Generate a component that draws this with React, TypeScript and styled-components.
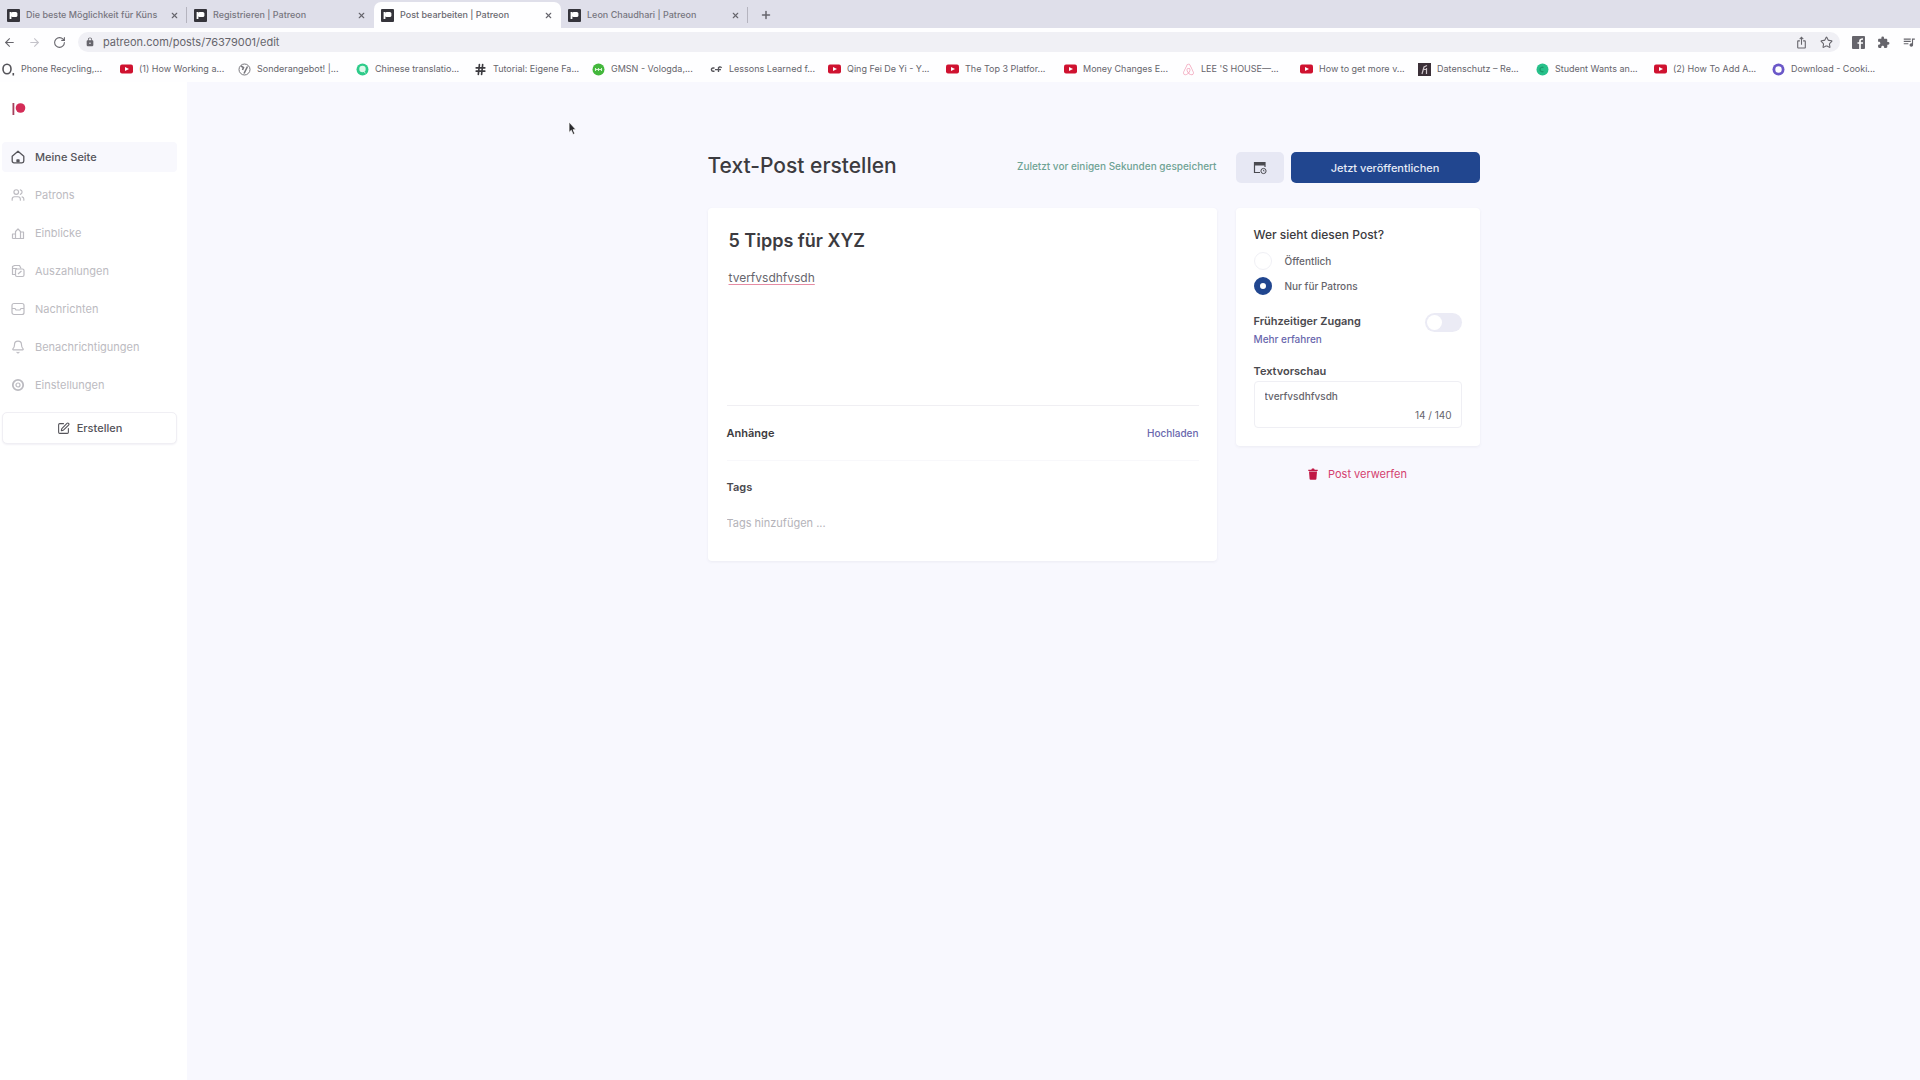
import React, { useState } from 'react';
import styled, { createGlobalStyle, css } from 'styled-components';
import { ArrowLeft, ArrowRight, RotateCw, X, Plus, Star, Users, Bell, SquarePen, Hash } from 'lucide-react';
import { MdExtension, MdQueueMusic, MdLock, MdIosShare } from 'react-icons/md';
import { FaAirbnb } from 'react-icons/fa';

const GlobalStyle = createGlobalStyle`
  *, *::before, *::after { box-sizing: border-box; }
  body {
    margin: 0;
    background: #f8f8fe;
    color: #3c3b40;
    font-family: Inter, "Liberation Sans", sans-serif;
    font-size: 11px;
    line-height: 16px;
  }
  button, input, textarea { font: inherit; color: inherit; }
  button { border: 0; padding: 0; background: none; cursor: pointer; }
  a { color: inherit; text-decoration: none; }
  svg { display: block; flex: none; }
  h1, h2, p { margin: 0; }
`;

const Page = styled.div`
  display: flex;
  flex-direction: column;
  min-height: 100vh;
`;

/* ---------- Browser chrome ---------- */

const TabStrip = styled.div`
  display: flex;
  align-items: stretch;
  height: 28px;
  background: #dfdfea;
`;

const Tab = styled.div<{ $active?: boolean; $divider?: boolean }>`
  display: flex;
  align-items: center;
  gap: 6px;
  width: 187px;
  margin-top: 2px;
  padding: 0 8px 0 7px;
  color: #77767f;
  font-size: 9px;
  border-radius: 7px 7px 0 0;
  ${p => p.$active && css`
    background: #fefeff;
    color: #6a6970;
  `}
  ${p => p.$divider && css`
    border-radius: 0;
    background: linear-gradient(#b5b4bf, #b5b4bf) right center / 1px 16px no-repeat;
  `}
`;

const TabTitle = styled.button`
  flex: 1;
  min-width: 0;
  white-space: nowrap;
  text-align: left;
  font-weight: 500;
`;

const IconButton = styled.button`
  display: flex;
  align-items: center;
  justify-content: center;
  color: #66656c;
`;

const NewTab = styled(IconButton)`
  width: 36px;
  margin-top: 2px;
`;

const Toolbar = styled.div`
  display: flex;
  align-items: center;
  gap: 12px;
  height: 28px;
  padding: 0 4px 0 3px;
  background: #fefeff;
`;

const Omnibox = styled.div`
  display: flex;
  align-items: center;
  flex: 1;
  gap: 8px;
  height: 20px;
  padding: 0 7px;
  border-radius: 10px;
  background: #f0f0f5;
  color: #66656c;
`;

const Address = styled.input`
  flex: 1;
  min-width: 0;
  border: 0;
  padding: 0;
  outline: 0;
  background: none;
  font-size: 11px;
`;

const IconRow = styled.div`
  display: flex;
  gap: 12px;
`;

const Bookmarks = styled.nav`
  display: flex;
  align-items: center;
  height: 26px;
  padding-left: 2px;
  overflow: hidden;
  background: #fefeff;
`;

const Bookmark = styled.a`
  display: flex;
  align-items: center;
  gap: 6px;
  flex: none;
  width: 118px;
  color: #66656c;
  font-size: 9px;
  white-space: nowrap;
`;

/* ---------- App layout ---------- */

const Shell = styled.div`
  display: flex;
  flex: 1;
`;

const Sidebar = styled.aside`
  flex: none;
  width: 187px;
  padding: 20px 10px 0 2px;
  background: #fff;
`;

const Logo = styled.a`
  display: block;
  width: 16px;
  margin: 0 0 26px 10px;
`;

const NavList = styled.nav`
  display: flex;
  flex-direction: column;
  gap: 8px;
`;

const NavItem = styled.a<{ $active?: boolean }>`
  display: flex;
  align-items: center;
  gap: 10px;
  height: 30px;
  padding-left: 9px;
  border-radius: 4px;
  color: ${p => (p.$active ? '#55545a' : '#bcbbc1')};
  background: ${p => (p.$active ? '#f8f8fd' : 'transparent')};
  font-weight: ${p => (p.$active ? 500 : 400)};
`;

const CreateButton = styled.button`
  display: flex;
  align-items: center;
  justify-content: center;
  gap: 7px;
  width: 100%;
  height: 32px;
  margin-top: 12px;
  border: 1px solid #f0eff4;
  border-radius: 5px;
  background: #fff;
  box-shadow: 0 1px 2px #f2f1f6;
  color: #55545a;
  font-weight: 500;
`;

const Main = styled.main`
  flex: 1;
  display: flex;
  justify-content: center;
  padding: 70px 0 40px 80px;
`;

const Editor = styled.form`
  display: grid;
  grid-template-columns: minmax(0, 509px) 244px;
  grid-template-rows: 31px auto;
  column-gap: 19px;
  row-gap: 25px;
  align-items: start;
`;

const Heading = styled.header`
  display: flex;
  align-items: center;
  justify-content: space-between;
`;

const PageTitle = styled.h1`
  font-size: 21px;
  line-height: 28px;
  font-weight: 500;
`;

const Saved = styled.p`
  color: #6fa394;
  font-size: 10px;
  font-weight: 500;
`;

const Actions = styled.div`
  display: flex;
  gap: 7px;
  height: 31px;
`;

const ScheduleButton = styled(IconButton)`
  width: 48px;
  border-radius: 5px;
  background: #e7e8f4;
  color: #4a4a50;
`;

const PublishButton = styled.button`
  flex: 1;
  border-radius: 5px;
  background: #21468f;
  color: #e6ebf7;
  font-weight: 500;
`;

const Card = styled.section`
  border-radius: 4px;
  background: #fff;
  box-shadow: 0 1px 3px #ebebf3;
`;

const PostCard = styled(Card)`
  padding: 18px 18px 28px 19px;
`;

const PostTitle = styled.input`
  display: block;
  width: 100%;
  height: 28px;
  padding: 0 2px;
  border: 0;
  outline: 0;
  background: none;
  font-size: 18px;
  font-weight: 600;
`;

const PostBody = styled.textarea`
  display: block;
  width: 100%;
  height: 136px;
  margin-top: 15px;
  padding: 0 2px;
  border: 0;
  outline: 0;
  resize: none;
  background: none;
  color: #66656c;
  font-size: 12px;
  line-height: 18px;
  text-decoration: underline 1px #e58ca4;
  text-underline-offset: 2px;
`;

const Attachments = styled.div`
  display: flex;
  align-items: center;
  justify-content: space-between;
  height: 56px;
  border-top: 1px solid #f0eff3;
  border-bottom: 1px solid #f8f8fb;
`;

const SmallTitle = styled.h2`
  font-size: 11px;
  line-height: 16px;
  font-weight: 600;
`;

const LinkButton = styled.button`
  color: #6967ad;
  font-size: 10px;
  font-weight: 500;
`;

const Tags = styled.div`
  display: flex;
  flex-direction: column;
  gap: 18px;
  padding-top: 18px;
`;

const FieldLabel = styled.label`
  display: block;
  font-weight: 600;
  color: #4a494e;
`;

const TagInput = styled.input`
  width: 100%;
  height: 20px;
  padding: 0;
  border: 0;
  outline: 0;
  background: none;
  font-size: 11px;
  &::placeholder { color: #b4b3b9; opacity: 1; }
`;

const Side = styled.div`
  display: flex;
  flex-direction: column;
  align-items: center;
  gap: 20px;
`;

const SettingsCard = styled(Card)`
  width: 100%;
  padding: 18px;
`;

const Audience = styled.fieldset`
  display: flex;
  flex-direction: column;
  gap: 7px;
  margin: 0;
  padding: 0;
  border: 0;
`;

const Legend = styled.legend`
  padding: 0;
  margin-bottom: 8px;
  font-size: 12px;
  line-height: 18px;
  font-weight: 500;
`;

const RadioLabel = styled.label`
  display: flex;
  align-items: center;
  gap: 13px;
  height: 18px;
  color: #66656c;
  font-size: 10px;
  font-weight: 500;
`;

const Radio = styled.input.attrs({ type: 'radio' })`
  appearance: none;
  width: 18px;
  height: 18px;
  margin: 0;
  border: 1px solid #f0f0f5;
  border-radius: 50%;
  background: #fff;
  &:checked { border: 6px solid #21468f; }
`;

const EarlyAccess = styled.div`
  display: flex;
  align-items: flex-start;
  justify-content: space-between;
  margin-top: 18px;
`;

const MoreLink = styled.a`
  display: block;
  margin-top: 2px;
  color: #6967ad;
  font-size: 10px;
  font-weight: 500;
`;

const Switch = styled.input.attrs({ type: 'checkbox', role: 'switch' })`
  appearance: none;
  display: flex;
  width: 37px;
  height: 19px;
  margin: 0;
  padding: 2px;
  border-radius: 10px;
  background: #ebebf5;
  &::before {
    content: '';
    width: 15px;
    height: 15px;
    border-radius: 50%;
    background: #fff;
  }
  &:checked { justify-content: flex-end; background: #21468f; }
`;

const Preview = styled.div`
  margin-top: 16px;
`;

const PreviewBox = styled.div`
  display: flex;
  flex-direction: column;
  height: 47px;
  margin-top: 2px;
  padding: 6px 9px 4px 10px;
  border: 1px solid #efeff4;
  border-radius: 4px;
  color: #66656c;
  font-size: 10px;
`;

const PreviewText = styled.textarea`
  flex: 1;
  min-height: 0;
  padding: 0;
  border: 0;
  outline: 0;
  resize: none;
  overflow: hidden;
  background: none;
  font-weight: 500;
`;

const Counter = styled.output`
  align-self: flex-end;
`;

const Discard = styled.button`
  display: flex;
  align-items: center;
  gap: 10px;
  color: #d4416f;
  font-size: 11px;
`;

const Pointer = styled.svg`
  position: absolute;
  left: 568px;
  top: 121px;
  pointer-events: none;
`;

/* ---------- Drawings ---------- */

const PatreonFavicon = () => (
  <svg width="13" height="13" viewBox="0 0 13 13">
    <rect width="13" height="13" rx="1" fill="#35343b" />
    <rect x="2.6" y="3" width="1.8" height="7" fill="#fff" />
    <rect x="4" y="3" width="6.400" height="5" rx="1.600" fill="#fff" />
  </svg>
);

const PatreonLogo = () => (
  <svg width="16" height="14" viewBox="0 0 16 14">
    <rect x="0.5" y="1" width="1.8" height="12" fill="#a5405c" />
    <circle cx="8.5" cy="6" r="4.8" fill="#d42c57" />
  </svg>
);

const YouTubeIcon = () => (
  <svg width="13" height="12" viewBox="0 0 13 12">
    <rect y="1.5" width="13" height="9" rx="2" fill="#cf1230" />
    <path d="M5 4l4 2-4 2z" fill="#fff" />
  </svg>
);

const Disc = ({ fill, children }: { fill: string; children?: React.ReactNode }) => (
  <svg width="13" height="13" viewBox="0 0 13 13">
    <circle cx="6.5" cy="6.5" r="6" fill={fill} />
    {children}
  </svg>
);

const icons: Record<string, React.ReactNode> = {
  q: (
    <svg width="13" height="13" viewBox="0 0 13 13" fill="none" stroke="#55545a" strokeWidth="1.6">
      <ellipse cx="5" cy="6" rx="4" ry="4.800" />
      <path d="M11.300 10v2.500" />
    </svg>
  ),
  yt: <YouTubeIcon />,
  globe: (
    <svg width="13" height="13" viewBox="0 0 13 13" fill="none" stroke="#77767c" strokeWidth="1">
      <circle cx="6.5" cy="6.5" r="5.5" />
      <path d="M3 3l2.500 1.500L4.500 7M6 10.500l3.500-7" strokeWidth="1.6" />
    </svg>
  ),
  chat: <Disc fill="#2ecb8a"><circle cx="6.5" cy="6" r="3.2" fill="#dcf8ea" /><path d="M7 8l2.5 2" stroke="#dcf8ea" /></Disc>,
  hash: <Hash size={13} color="#3c3b40" strokeWidth={3} />,
  gmsn: <Disc fill="#43b73c"><path d="M3 6.5h7M3.5 5v3M6.5 5v3M9.5 5v3" stroke="#d6f3d2" strokeWidth="1.1" /></Disc>,
  cf: (
    <svg width="13" height="13" viewBox="0 0 13 13" fill="none" stroke="#55545a" strokeWidth="1.4">
      <path d="M4.5 5H3a1.6 1.6 0 0 0 0 3.2h1.5M5 6.6h6M8.5 9V6a1.5 1.5 0 0 1 3-1" />
    </svg>
  ),
  airbnb: <FaAirbnb size={13} color="#f2a3ba" />,
  dark: (
    <svg width="13" height="13" viewBox="0 0 13 13">
      <rect width="13" height="13" fill="#3b3038" />
      <path d="M4 11l2-7 3-1.5M5 6.5h4M8.5 5v6" stroke="#cfc6cc" strokeWidth="1.2" fill="none" />
    </svg>
  ),
  green: <Disc fill="#27c08a"><path d="M7.5 4.5a2.3 2.3 0 1 0 0 4" stroke="#1c9a6c" strokeWidth="1.4" fill="none" /></Disc>,
  ring: <Disc fill="#6a57c8"><circle cx="6.5" cy="6.5" r="3.2" fill="#fff" /></Disc>,
};

const InsightsIcon = () => (
  <svg width="14" height="14" viewBox="0 0 14 14" fill="none" stroke="currentColor" strokeWidth="1.2" strokeLinejoin="round">
    <path d="M1.5 12.5V8h3v4.500M4.500 12.500V5.500L7 3l2.500 2.500v7M9.500 12.500V6h3v6.500zM1.500 12.500h11" />
  </svg>
);

const PayoutIcon = () => (
  <svg width="14" height="14" viewBox="0 0 14 14" fill="none" stroke="currentColor" strokeWidth="1.2" strokeLinejoin="round">
    <path d="M4.500 10.500h-3v-8l2-1h5l1.500 3" />
    <rect x="4.500" y="5" width="8.500" height="7.500" rx="1.500" />
    <path d="M2 4.500h4M7 10l3.500-3" />
  </svg>
);

const InboxIcon = () => (
  <svg width="14" height="14" viewBox="0 0 14 14" fill="none" stroke="currentColor" strokeWidth="1.2">
    <rect x="1" y="1.500" width="12" height="11" rx="2" />
    <path d="M1 6.500h3l1 1.500h4l1-1.500h3" />
  </svg>
);

const SettingsIcon = () => (
  <svg width="14" height="14" viewBox="0 0 14 14" fill="none" stroke="currentColor">
    <circle cx="7" cy="7" r="5.200" strokeWidth="1.800" />
    <circle cx="7" cy="7" r="2" strokeWidth="1.200" />
  </svg>
);

const HomeIcon = () => (
  <svg width="14" height="14" viewBox="0 0 14 14" fill="none" stroke="currentColor" strokeWidth="1.300" strokeLinejoin="round">
    <path d="M1.200 6.200L7 1.200l5.800 5v4.800a1.800 1.800 0 0 1-1.800 1.800H3A1.800 1.800 0 0 1 1.200 11z" />
    <path d="M6 11.500v-1.500h2v1.500z" fill="currentColor" />
  </svg>
);

const ScheduleIcon = () => (
  <svg width="14" height="14" viewBox="0 0 14 14" fill="none" stroke="currentColor">
    <path d="M7 11.500H1.500v-10h10.500V6" strokeWidth="1.200" />
    <path d="M1.500 3h10.500" strokeWidth="3" />
    <circle cx="10.500" cy="10" r="2.600" />
    <path d="M10.500 8.800V10h1" strokeWidth=".8" />
  </svg>
);

const TrashIcon = () => (
  <svg width="10" height="12" viewBox="0 0 10 12" fill="#c01845">
    <path d="M.3 1.800h3L4 .6h2l.7 1.200h3V3H.3zM1 3.600h8l-.6 7.400a1 1 0 0 1-1 .8H2.600a1 1 0 0 1-1-.8z" />
  </svg>
);

const FacebookIcon = () => (
  <svg width="13" height="13" viewBox="0 0 13 13">
    <rect width="13" height="13" rx="1" fill="#66656c" />
    <path d="M8 13V4.800C8 3.500 9 3 11 3M5.500 7H11" stroke="#fff" strokeWidth="1.700" fill="none" />
  </svg>
);

/* ---------- Data ---------- */

const tabs = [
  { title: 'Die beste Möglichkeit für Küns', divider: true },
  { title: 'Registrieren | Patreon' },
  { title: 'Post bearbeiten | Patreon', active: true },
  { title: 'Leon Chaudhari | Patreon', divider: true },
];

const bookmarks = [
  ['q', 'Phone Recycling,...'],
  ['yt', '(1) How Working a...'],
  ['globe', 'Sonderangebot! |...'],
  ['chat', 'Chinese translatio...'],
  ['hash', 'Tutorial: Eigene Fa...'],
  ['gmsn', 'GMSN - Vologda,...'],
  ['cf', 'Lessons Learned f...'],
  ['yt', 'Qing Fei De Yi - Y...'],
  ['yt', 'The Top 3 Platfor...'],
  ['yt', 'Money Changes E...'],
  ['airbnb', "LEE 'S HOUSE—..."],
  ['yt', 'How to get more v...'],
  ['dark', 'Datenschutz – Re...'],
  ['green', 'Student Wants an...'],
  ['yt', '(2) How To Add A...'],
  ['ring', 'Download - Cooki...'],
];

const navItems = [
  { label: 'Meine Seite', icon: <HomeIcon />, active: true },
  { label: 'Patrons', icon: <Users size={14} /> },
  { label: 'Einblicke', icon: <InsightsIcon /> },
  { label: 'Auszahlungen', icon: <PayoutIcon /> },
  { label: 'Nachrichten', icon: <InboxIcon /> },
  { label: 'Benachrichtigungen', icon: <Bell size={14} /> },
  { label: 'Einstellungen', icon: <SettingsIcon /> },
];

export default function App() {
  const [audience, setAudience] = useState('patrons');
  const [preview, setPreview] = useState('tverfvsdhfvsdh');

  return (
    <Page>
      <GlobalStyle />
      <TabStrip>
        {tabs.map(t => (
          <Tab key={t.title} $active={t.active} $divider={t.divider}>
            <PatreonFavicon />
            <TabTitle type="button">{t.title}</TabTitle>
            <IconButton type="button" aria-label="Tab schließen"><X size={9} strokeWidth={3} /></IconButton>
          </Tab>
        ))}
        <NewTab type="button" aria-label="Neuer Tab"><Plus size={12} strokeWidth={3} /></NewTab>
      </TabStrip>
      <Toolbar>
        <IconButton type="button" aria-label="Zurück"><ArrowLeft size={13} /></IconButton>
        <IconButton type="button" aria-label="Vorwärts"><ArrowRight size={13} color="#c4c3ca" /></IconButton>
        <IconButton type="button" aria-label="Neu laden"><RotateCw size={13} /></IconButton>
        <Omnibox>
          <MdLock size={10} />
          <Address aria-label="Adresse" defaultValue="patreon.com/posts/76379001/edit" />
          <IconRow>
            <IconButton type="button" aria-label="Teilen"><MdIosShare size={13} /></IconButton>
            <IconButton type="button" aria-label="Lesezeichen"><Star size={13} /></IconButton>
          </IconRow>
        </Omnibox>
        <IconRow>
          <IconButton type="button" aria-label="Facebook"><FacebookIcon /></IconButton>
          <IconButton type="button" aria-label="Erweiterungen"><MdExtension size={13} /></IconButton>
          <IconButton type="button" aria-label="Wiedergabeliste"><MdQueueMusic size={14} /></IconButton>
        </IconRow>
      </Toolbar>
      <Bookmarks aria-label="Lesezeichen">
        {bookmarks.map(([icon, label]) => (
          <Bookmark key={label} href="#">{icons[icon]}{label}</Bookmark>
        ))}
      </Bookmarks>

      <Shell>
        <Sidebar>
          <Logo href="#" aria-label="Patreon"><PatreonLogo /></Logo>
          <NavList>
            {navItems.map(n => (
              <NavItem key={n.label} href="#" $active={n.active}>{n.icon}{n.label}</NavItem>
            ))}
          </NavList>
          <CreateButton type="button"><SquarePen size={13} />Erstellen</CreateButton>
        </Sidebar>

        <Main>
          <Editor onSubmit={e => e.preventDefault()}>
            <Heading>
              <PageTitle>Text-Post erstellen</PageTitle>
              <Saved>Zuletzt vor einigen Sekunden gespeichert</Saved>
            </Heading>
            <Actions>
              <ScheduleButton type="button" aria-label="Planen"><ScheduleIcon /></ScheduleButton>
              <PublishButton type="submit">Jetzt veröffentlichen</PublishButton>
            </Actions>

            <PostCard>
              <PostTitle aria-label="Titel" defaultValue="5 Tipps für XYZ" />
              <PostBody aria-label="Inhalt" spellCheck={false} defaultValue="tverfvsdhfvsdh" />
              <Attachments>
                <SmallTitle>Anhänge</SmallTitle>
                <LinkButton type="button">Hochladen</LinkButton>
              </Attachments>
              <Tags>
                <FieldLabel htmlFor="tags">Tags</FieldLabel>
                <TagInput id="tags" placeholder="Tags hinzufügen ..." />
              </Tags>
            </PostCard>

            <Side>
              <SettingsCard>
                <Audience>
                  <Legend>Wer sieht diesen Post?</Legend>
                  <RadioLabel>
                    <Radio name="audience" checked={audience === 'public'} onChange={() => setAudience('public')} />
                    Öffentlich
                  </RadioLabel>
                  <RadioLabel>
                    <Radio name="audience" checked={audience === 'patrons'} onChange={() => setAudience('patrons')} />
                    Nur für Patrons
                  </RadioLabel>
                </Audience>
                <EarlyAccess>
                  <div>
                    <FieldLabel htmlFor="early">Frühzeitiger Zugang</FieldLabel>
                    <MoreLink href="#">Mehr erfahren</MoreLink>
                  </div>
                  <Switch id="early" />
                </EarlyAccess>
                <Preview>
                  <FieldLabel htmlFor="preview">Textvorschau</FieldLabel>
                  <PreviewBox>
                    <PreviewText id="preview" spellCheck={false} maxLength={140} value={preview} onChange={e => setPreview(e.target.value)} />
                    <Counter htmlFor="preview">{preview.length} / 140</Counter>
                  </PreviewBox>
                </Preview>
              </SettingsCard>
              <Discard type="button"><TrashIcon />Post verwerfen</Discard>
            </Side>
          </Editor>
        </Main>
      </Shell>

      <Pointer width="9" height="15" viewBox="0 0 9 15" aria-hidden="true">
        <path d="M1 1v10.500l2.300-2.200 1.700 4.200 1.800-.8-1.700-4H8z" fill="#2a2a2e" stroke="#fff" strokeWidth=".8" />
      </Pointer>
    </Page>
  );
}
